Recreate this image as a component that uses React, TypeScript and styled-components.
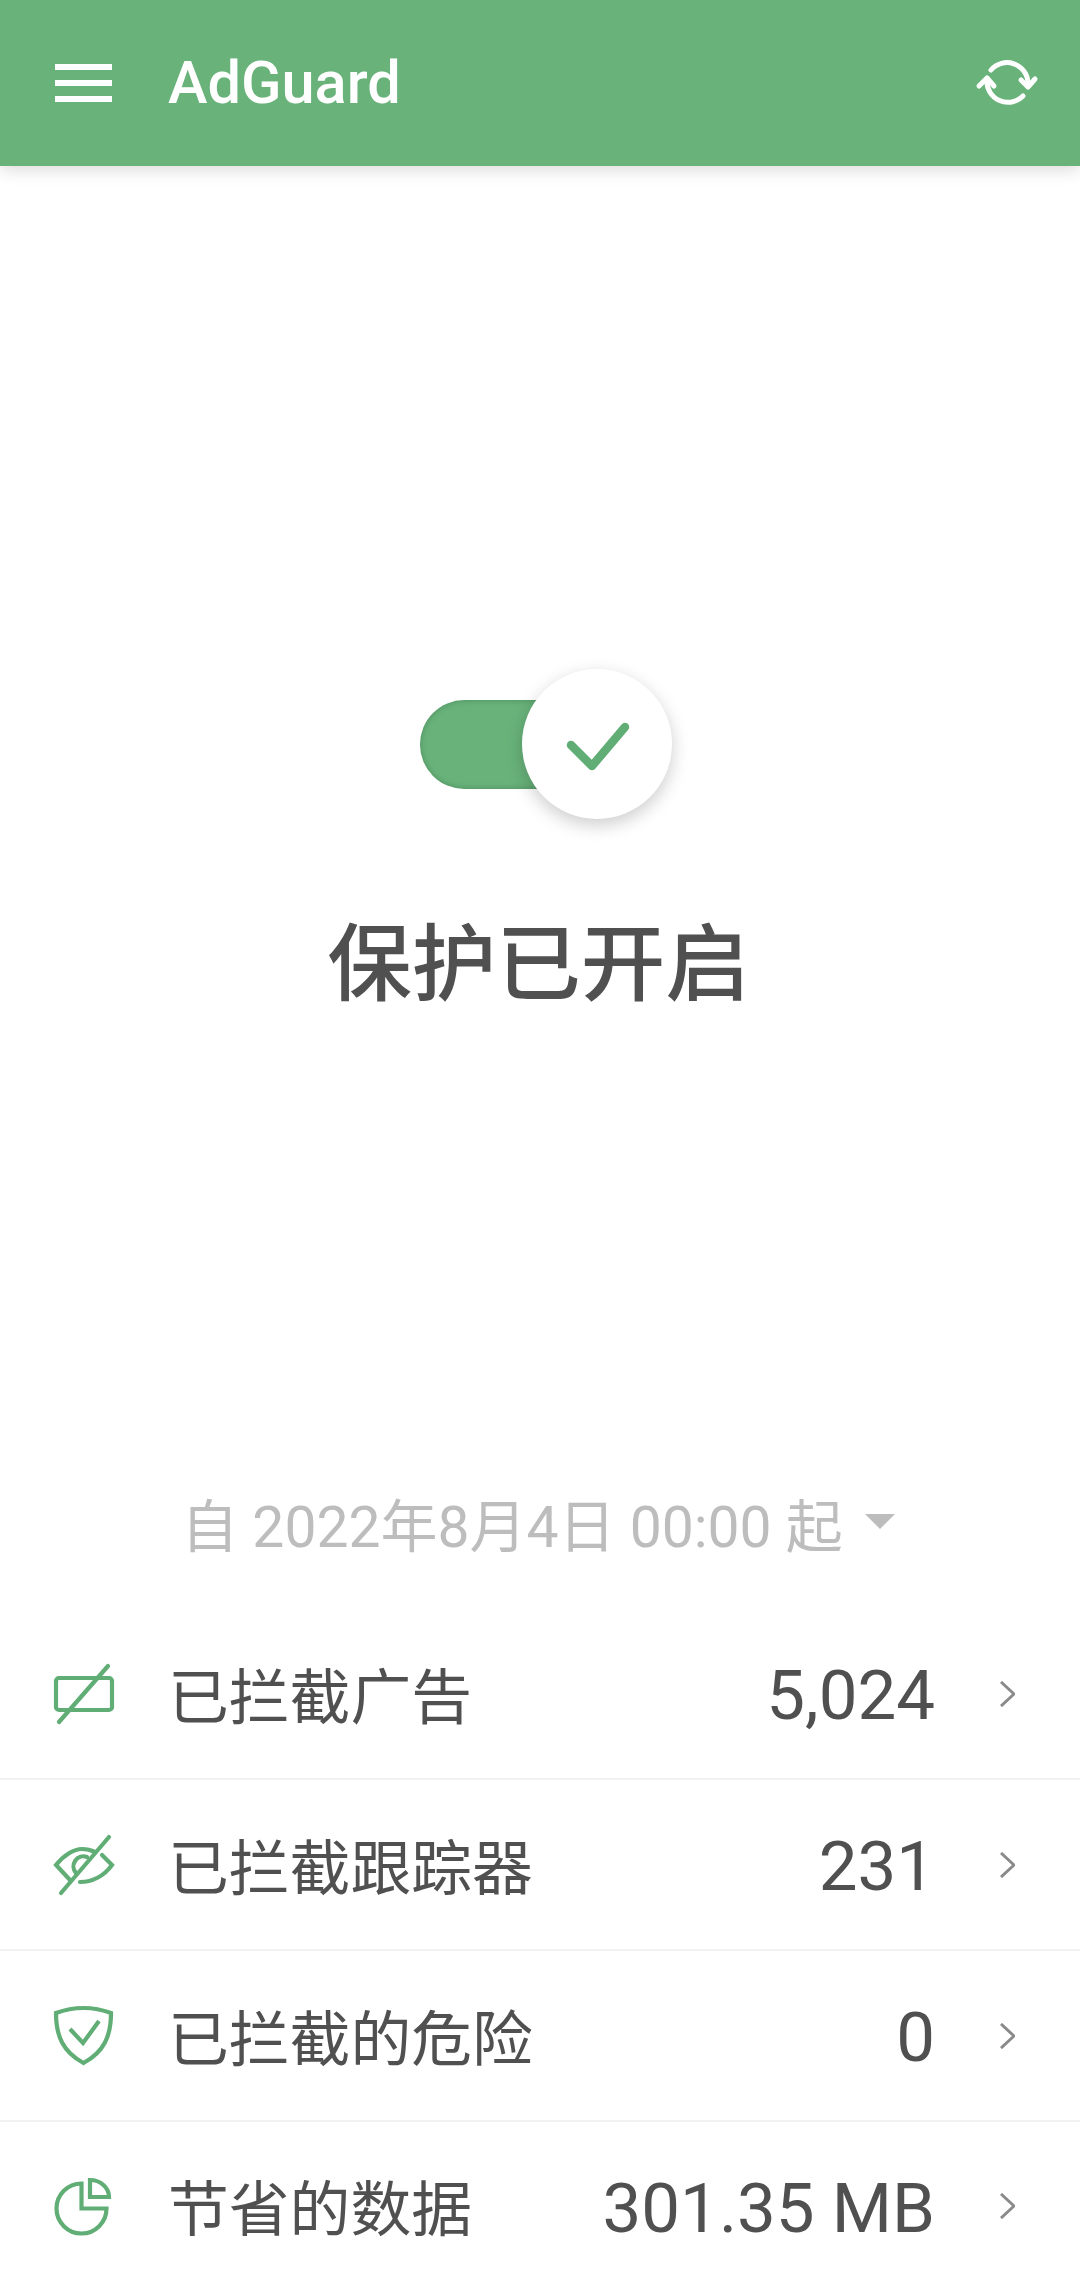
import React from 'react'
import styled, { createGlobalStyle } from 'styled-components'

const GREEN = '#69b37b'
const ICON_GREEN = '#60ae76'
const TEXT = '#505050'

const GlobalStyle = createGlobalStyle`
  html, body {
    margin: 0;
    padding: 0;
    background: #fff;
  }
  * {
    box-sizing: border-box;
  }
`

const Page = styled.div`
  width: 1080px;
  height: 2290px;
  overflow: hidden;
  display: flex;
  flex-direction: column;
  background: #fff;
  font-family: Roboto, "Noto Sans CJK SC", sans-serif;
`

const Header = styled.header`
  height: 166px;
  flex: none;
  display: flex;
  align-items: center;
  padding: 0 40px 0 55px;
  background: ${GREEN};
  box-shadow: 0 4px 16px rgba(0, 0, 0, 0.14);
  position: relative;
`

const Title = styled.h1`
  margin: 0 0 0 56px;
  font-size: 59.5px;
  line-height: 166px;
  font-weight: 500;
  color: #fff;
  flex: 1;
`

const Hero = styled.section`
  display: flex;
  flex-direction: column;
  align-items: center;
  padding-top: 503px;
`

const Toggle = styled.div`
  position: relative;
  width: 252px;
  height: 150px;
  margin-left: 12px;
  display: flex;
  align-items: center;
`

const Track = styled.div`
  width: 190px;
  height: 89px;
  border-radius: 45px;
  background: ${GREEN};
  box-shadow: inset 0 0 6px rgba(40, 90, 55, 0.45);
`

const Knob = styled.div`
  position: absolute;
  top: 0;
  right: 0;
  width: 150px;
  height: 150px;
  border-radius: 50%;
  background: #fff;
  box-shadow: 0 6px 18px rgba(0, 0, 0, 0.2);
  display: flex;
  align-items: center;
  justify-content: center;
`

const Status = styled.h2`
  margin: 88px 0 0;
  width: 100%;
  padding-right: 3px;
  text-align: center;
  font-family: "Noto Sans CJK SC", sans-serif;
  font-size: 84.5px;
  line-height: 100px;
  font-weight: 500;
  color: ${TEXT};
`

const Stats = styled.section`
  margin-top: auto;
  display: flex;
  flex-direction: column;
`

const Since = styled.div`
  height: 60px;
  margin-bottom: 57px;
  display: flex;
  align-items: center;
  justify-content: center;
  gap: 22px;
  padding-right: 4px;
  font-size: 57px;
  color: #bdbdbd;
  white-space: nowrap;
`

const Caret = styled.span`
  width: 0;
  height: 0;
  border-left: 15px solid transparent;
  border-right: 15px solid transparent;
  border-top: 15px solid #bdbdbd;
  margin-top: -2px;
`

const Row = styled.div<{ $last?: boolean }>`
  height: ${(p) => (p.$last ? '168px' : '171px')};
  flex: none;
  display: flex;
  align-items: center;
  padding: 0 65px 0 52px;
  border-bottom: ${(p) => (p.$last ? 'none' : '2px solid #f2f2f2')};
`

const RowIcon = styled.svg`
  width: 64px;
  height: 64px;
  flex: none;
  fill: none;
  stroke: ${ICON_GREEN};
  stroke-width: 4.2;
  stroke-linecap: round;
`

const Label = styled.span`
  margin-left: 52px;
  margin-top: -2px;
  font-family: "Noto Sans CJK SC", sans-serif;
  font-size: 60.8px;
  line-height: 80px;
  color: ${TEXT};
`

const Value = styled.span`
  margin-left: auto;
  margin-top: 5px;
  font-size: 69px;
  line-height: 80px;
  color: ${TEXT};
`

const Chevron = styled.svg`
  width: 15px;
  height: 26px;
  flex: none;
  margin-left: 65px;
  fill: none;
  stroke: #8a8a8a;
  stroke-width: 3;
`

const stats = [
  {
    label: '已拦截广告',
    value: '5,024',
    icon: (
      <>
        <rect x="4" y="16" width="56" height="32" rx="3" />
        <path d="M56 4L7 60" />
      </>
    ),
  },
  {
    label: '已拦截跟踪器',
    value: '231',
    icon: (
      <>
        <path d="M18 47L4 32C12 22 22 16 30 16C35 16 39 17 43 19" />
        <path d="M50 22L60 32C52 43 40 49 28 49" />
        <path d="M24 40A10 10 0 0 1 35 24" />
        <path d="M57 4L9 60" />
      </>
    ),
  },
  {
    label: '已拦截的危险',
    value: '0',
    icon: (
      <>
        <path d="M4 9C12 6 22 4 31.5 4C41 4 51 6 59 9C59 32 52 48 31.5 59C11 48 4 32 4 9Z" />
        <path d="M18 25L31 39L47 17" strokeLinecap="butt" />
      </>
    ),
  },
  {
    label: '节省的数据',
    value: '301.35 MB',
    icon: (
      <>
        <path d="M29.5 9.5A25 25 0 1 0 54.5 34.5H29.5Z" />
        <path d="M38 6A19 17 0 0 1 57 23H38Z" />
      </>
    ),
  },
]

export default function App() {
  return (
    <Page>
      <GlobalStyle />
      <Header>
        <svg width="57" height="38" viewBox="0 0 57 38" fill="#fff">
          <rect y="0" width="57" height="6" />
          <rect y="16" width="57" height="6" />
          <rect y="32" width="57" height="6" />
        </svg>
        <Title>AdGuard</Title>
        <svg width="66" height="54" viewBox="0 0 66 54" fill="none" stroke="#fff" strokeWidth="5" strokeLinecap="round" strokeLinejoin="round">
          <path d="M17 14A21 21 0 0 1 54 27" />
          <path d="M49 40A21 21 0 0 1 13 24" />
          <path d="M47 24L54 31L61 23" />
          <path d="M5 30L13 22L20 30" />
        </svg>
      </Header>
      <Hero>
        <Toggle>
          <Track />
          <Knob>
            <svg width="68" height="56" viewBox="0 0 68 56" fill="none" stroke={ICON_GREEN} strokeWidth="8.5" strokeLinecap="round" strokeLinejoin="round">
              <path d="M8 29L29 50L62 11" />
            </svg>
          </Knob>
        </Toggle>
        <Status>保护已开启</Status>
      </Hero>
      <Stats>
        <Since>
          <span>自 2022年8月4日 00:00 起</span>
          <Caret />
        </Since>
        {stats.map((s, i) => (
          <Row key={s.label} $last={i === stats.length - 1}>
            <RowIcon viewBox="0 0 64 64">{s.icon}</RowIcon>
            <Label>{s.label}</Label>
            <Value>{s.value}</Value>
            <Chevron viewBox="0 0 15 26">
              <path d="M1 1L14 13L1 25" />
            </Chevron>
          </Row>
        ))}
      </Stats>
    </Page>
  )
}
